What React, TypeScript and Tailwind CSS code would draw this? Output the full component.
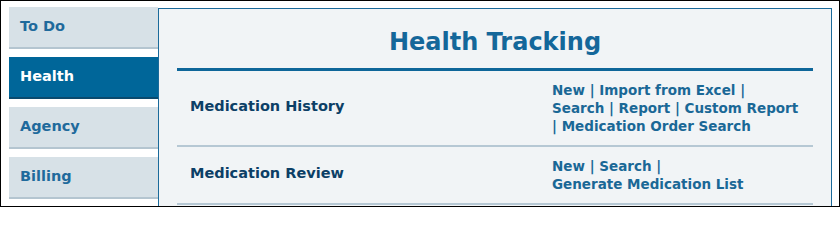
const tabs = [
  { label: "To Do", active: false },
  { label: "Health", active: true },
  { label: "Agency", active: false },
  { label: "Billing", active: false },
  { label: "", active: false },
];

interface Section {
  title: string;
  // each inner array is one printed line; "|" marks a separator
  lines: string[][];
}

const sections: Section[] = [
  {
    title: "Medication History",
    lines: [
      ["New", "|", "Import from Excel", "|"],
      ["Search", "|", "Report", "|", "Custom Report"],
      ["|", "Medication Order Search"],
    ],
  },
  {
    title: "Medication Review",
    lines: [["New", "|", "Search", "|"], ["Generate Medication List"]],
  },
];

function LinkList({ lines }: { lines: string[][] }) {
  return (
    <div className="text-[13.5px] leading-[18px] font-bold text-[#1a6896] whitespace-nowrap">
      {lines.map((line, li) => (
        <div key={li}>
          {line.map((tok, i) => (
            <span key={i}>
              {i > 0 && " "}
              {tok === "|" ? (
                "|"
              ) : (
                <a href="#" className="hover:underline">
                  {tok}
                </a>
              )}
            </span>
          ))}
        </div>
      ))}
    </div>
  );
}

export default function App() {
  return (
    <div
      className="h-[207px] w-[840px] overflow-hidden border border-black bg-white pt-[6px] pl-[8px] pr-[7px] flex items-start"
      style={{ fontFamily: '"DejaVu Sans", Verdana, sans-serif' }}
    >
      <nav className="w-[149px] shrink-0 flex flex-col gap-[8px]">
        {tabs.map((t, i) => (
          <a
            key={i}
            href="#"
            className={
              t.active
                ? "h-[42px] flex items-center pl-[11px] text-[14.5px] font-bold text-white bg-[#006699] border-b-2 border-[#0a4a6e]"
                : "h-[42px] flex items-center pl-[11px] text-[14.5px] font-bold text-[#1f6a9c] bg-[#d7e1e7] border-b-2 border-[#b4c5d0]"
            }
          >
            {t.label}
          </a>
        ))}
      </nav>

      <main className="flex-1 mt-px h-[210px] border border-[#1a6a9a] bg-[#f1f4f6] px-[18px]">
        <h1 className="pt-[17px] pb-[10px] text-center text-[24px] leading-[32px] font-bold text-[#14679a] border-b-[3px] border-[#0e6699]">
          Health Tracking
        </h1>
        {sections.map((s) => (
          <div
            key={s.title}
            className="flex items-center py-[10px] border-b-2 border-[#b6c8d4]"
          >
            <div className="w-[375px] pl-[13px] pb-[3px] text-[14.5px] font-bold text-[#0c3f66]">
              {s.title}
            </div>
            <LinkList lines={s.lines} />
          </div>
        ))}
      </main>
    </div>
  );
}
